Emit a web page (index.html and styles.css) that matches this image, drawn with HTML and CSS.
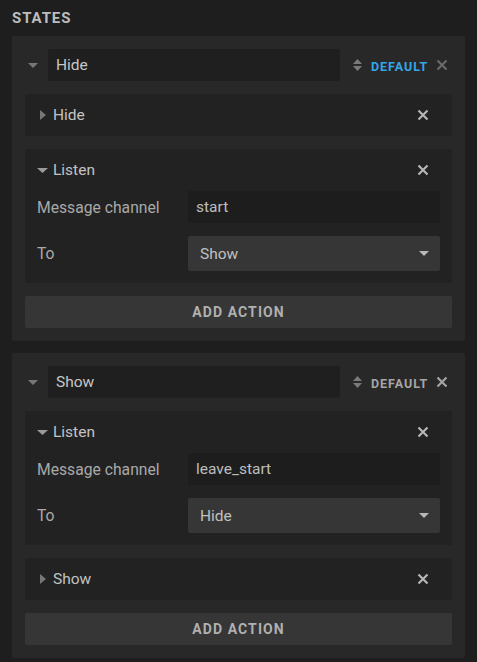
FILE: index.html
```html
<!DOCTYPE html>
<html>
<head>
<meta charset="utf-8">
<link rel="stylesheet" href="styles.css">
</head>
<body>
<div class="title">STATES</div>

<div class="state">
  <div class="state-head">
    <span class="caret"><svg width="10" height="5" viewBox="0 0 10 5"><path d="M0 0H10L5 5Z" fill="#777"/></svg></span>
    <div class="name-input">Hide</div>
    <span class="order"><svg width="9" height="12" viewBox="0 0 9 12"><path d="M4.5 0L9 5H0Z M0 7H9L4.5 12Z" fill="#7a7a7a"/></svg></span>
    <span class="default active">DEFAULT</span>
    <span class="close dim"><svg width="12" height="12" viewBox="0 0 12 12"><path d="M1.5 1.5L10.5 10.5M10.5 1.5L1.5 10.5" stroke="currentColor" stroke-width="2.2"/></svg></span>
  </div>

  <div class="action collapsed">
    <span class="rcaret"><svg width="6" height="10" viewBox="0 0 6 10"><path d="M0 0L6 5L0 10Z" fill="#777"/></svg></span>
    <span class="action-name">Hide</span>
    <span class="close inner"><svg width="12" height="12" viewBox="0 0 12 12"><path d="M1.5 1.5L10.5 10.5M10.5 1.5L1.5 10.5" stroke="currentColor" stroke-width="2.2"/></svg></span>
  </div>

  <div class="action open">
    <div class="action-head">
      <span class="dcaret"><svg width="11" height="5" viewBox="0 0 11 5"><path d="M0 0H11L5.5 5Z" fill="#9a9a9a"/></svg></span>
      <span class="action-name">Listen</span>
      <span class="close inner"><svg width="12" height="12" viewBox="0 0 12 12"><path d="M1.5 1.5L10.5 10.5M10.5 1.5L1.5 10.5" stroke="currentColor" stroke-width="2.2"/></svg></span>
    </div>
    <div class="fields">
      <span class="label">Message channel</span>
      <div class="text-input">start</div>
      <span class="label">To</span>
      <div class="select"><span>Show</span><svg width="10" height="5" viewBox="0 0 10 5"><path d="M0 0H10L5 5Z" fill="#b8b8b8"/></svg></div>
    </div>
  </div>

  <div class="add-btn">ADD ACTION</div>
</div>

<div class="state">
  <div class="state-head">
    <span class="caret"><svg width="10" height="5" viewBox="0 0 10 5"><path d="M0 0H10L5 5Z" fill="#777"/></svg></span>
    <div class="name-input">Show</div>
    <span class="order"><svg width="9" height="12" viewBox="0 0 9 12"><path d="M4.5 0L9 5H0Z M0 7H9L4.5 12Z" fill="#7a7a7a"/></svg></span>
    <span class="default">DEFAULT</span>
    <span class="close"><svg width="12" height="12" viewBox="0 0 12 12"><path d="M1.5 1.5L10.5 10.5M10.5 1.5L1.5 10.5" stroke="currentColor" stroke-width="2.2"/></svg></span>
  </div>

  <div class="action open">
    <div class="action-head">
      <span class="dcaret"><svg width="11" height="5" viewBox="0 0 11 5"><path d="M0 0H11L5.5 5Z" fill="#9a9a9a"/></svg></span>
      <span class="action-name">Listen</span>
      <span class="close inner"><svg width="12" height="12" viewBox="0 0 12 12"><path d="M1.5 1.5L10.5 10.5M10.5 1.5L1.5 10.5" stroke="currentColor" stroke-width="2.2"/></svg></span>
    </div>
    <div class="fields">
      <span class="label">Message channel</span>
      <div class="text-input">leave_start</div>
      <span class="label">To</span>
      <div class="select"><span>Hide</span><svg width="10" height="5" viewBox="0 0 10 5"><path d="M0 0H10L5 5Z" fill="#b8b8b8"/></svg></div>
    </div>
  </div>

  <div class="action collapsed">
    <span class="rcaret"><svg width="6" height="10" viewBox="0 0 6 10"><path d="M0 0L6 5L0 10Z" fill="#777"/></svg></span>
    <span class="action-name">Show</span>
    <span class="close inner"><svg width="12" height="12" viewBox="0 0 12 12"><path d="M1.5 1.5L10.5 10.5M10.5 1.5L1.5 10.5" stroke="currentColor" stroke-width="2.2"/></svg></span>
  </div>

  <div class="add-btn">ADD ACTION</div>
</div>
</body>
</html>
```
FILE: styles.css
```css
* { box-sizing: border-box; }
html, body {
  margin: 0;
  padding: 0;
  background: #1e1e1e;
  font-family: Roboto, "Liberation Sans", sans-serif;
  color: #c4c4c4;
}
svg { display: block; }

.title {
  height: 36px;
  padding: 9px 12px 0;
  font-size: 15px;
  line-height: 18px;
  font-weight: 700;
  letter-spacing: 0.9px;
  color: #bdbdbd;
}

.state {
  margin: 0 12px 12px;
  padding: 13px;
  background: #282828;
  border-radius: 2px;
}

.state-head {
  display: flex;
  align-items: center;
  height: 32px;
}
.caret {
  width: 23px;
  padding-left: 3px;
}
.name-input {
  width: 292px;
  height: 32px;
  line-height: 32px;
  padding-left: 8px;
  background: #1f1f1f;
  border-radius: 2px;
  font-size: 15.5px;
  color: #c6c6c6;
}
.order { margin-left: 13px; }
.default {
  margin-left: 9px;
  font-size: 12.5px;
  font-weight: 700;
  letter-spacing: 0.95px;
  color: #a6a6a6;
  line-height: 14px;
  padding-top: 3px;
}
.default.active { color: #34a6e8; }
.close {
  margin-left: auto;
  margin-right: 4px;
  color: #a4a4a4;
}
.close.dim { color: #6a6a6a; }
.close.inner {
  margin-right: 23px;
  color: #b6b6b6;
}

.action {
  margin-top: 13px;
  background: #222222;
  border-radius: 2px;
}
.action.collapsed {
  display: flex;
  align-items: center;
  height: 42px;
}
.rcaret { margin-left: 15px; }
.collapsed .action-name { margin-left: 7px; }
.action-name {
  font-size: 15.5px;
  color: #c2c2c2;
}

.action.open {
  padding: 0 12px 12px;
}
.action-head {
  display: flex;
  align-items: center;
  height: 42px;
}
.action-head .action-name { margin-left: 5px; }
.action-head .close.inner { margin-right: 11px; }

.fields {
  display: grid;
  grid-template-columns: 151px 1fr;
  row-gap: 13px;
  align-items: center;
}
.label {
  font-size: 15.7px;
  color: #a9a9a9;
}
.text-input {
  height: 32px;
  line-height: 32px;
  padding-left: 8px;
  background: #1d1d1d;
  border-radius: 2px;
  font-size: 15.5px;
  color: #bdbdbd;
}
.select {
  height: 35px;
  display: flex;
  align-items: center;
  justify-content: space-between;
  padding: 0 11px 0 12px;
  background: #363636;
  border-radius: 2px;
  font-size: 15.5px;
  color: #c0c0c0;
}

.add-btn {
  margin-top: 13px;
  height: 32px;
  line-height: 32px;
  text-align: center;
  background: #363636;
  border-radius: 2px;
  font-size: 14px;
  font-weight: 700;
  letter-spacing: 1.1px;
  color: #b0b0b0;
}
```
